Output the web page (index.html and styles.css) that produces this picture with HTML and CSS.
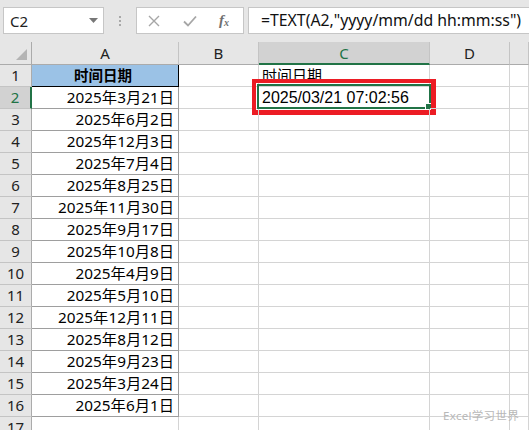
FILE: index.html
```html
<!DOCTYPE html>
<html>
<head>
<meta charset="utf-8">
<link rel="stylesheet" href="styles.css">
</head>
<body>
<div class="app">
  <div class="topbar">
    <div class="namebox"><span class="ref">C2</span><svg class="dd" width="9" height="5" viewBox="0 0 9 5"><path d="M0 0h9L4.5 5z" fill="#777"/></svg></div>
    <div class="grip"><i></i><i></i><i></i></div>
    <div class="btns">
      <svg class="ic" width="12" height="12" viewBox="0 0 12 12"><path d="M1 1L11 11M11 1L1 11" stroke="#a6a6a6" stroke-width="1.4" fill="none"/></svg>
      <svg class="ic" width="14" height="12" viewBox="0 0 14 12"><path d="M1 6.5L5 10.5L13 1.5" stroke="#a6a6a6" stroke-width="1.8" fill="none"/></svg>
      <span class="fx">f<sub>x</sub></span>
    </div>
    <div class="formula">=TEXT(A2,"yyyy/mm/dd hh:mm:ss")</div>
  </div>
  <div class="sheet">
    <div class="corner"><span class="tri"></span></div>
    <div class="ch">A</div><div class="ch">B</div><div class="ch sel">C</div><div class="ch">D</div><div class="ch last"></div>

    <div class="rh">1</div><div class="c a head">时间日期</div><div class="c"></div><div class="c txt">时间日期</div><div class="c"></div><div class="c"></div>
    <div class="rh sel">2</div><div class="c a">2025年3月21日</div><div class="c"></div><div class="c txt val">2025/03/21 07:02:56<span class="selbox"><span class="handle"></span></span><span class="redbox"></span></div><div class="c"></div><div class="c"></div>
    <div class="rh">3</div><div class="c a">2025年6月2日</div><div class="c"></div><div class="c"></div><div class="c"></div><div class="c"></div>
    <div class="rh">4</div><div class="c a">2025年12月3日</div><div class="c"></div><div class="c"></div><div class="c"></div><div class="c"></div>
    <div class="rh">5</div><div class="c a">2025年7月4日</div><div class="c"></div><div class="c"></div><div class="c"></div><div class="c"></div>
    <div class="rh">6</div><div class="c a">2025年8月25日</div><div class="c"></div><div class="c"></div><div class="c"></div><div class="c"></div>
    <div class="rh">7</div><div class="c a">2025年11月30日</div><div class="c"></div><div class="c"></div><div class="c"></div><div class="c"></div>
    <div class="rh">8</div><div class="c a">2025年9月17日</div><div class="c"></div><div class="c"></div><div class="c"></div><div class="c"></div>
    <div class="rh">9</div><div class="c a">2025年10月8日</div><div class="c"></div><div class="c"></div><div class="c"></div><div class="c"></div>
    <div class="rh">10</div><div class="c a">2025年4月9日</div><div class="c"></div><div class="c"></div><div class="c"></div><div class="c"></div>
    <div class="rh">11</div><div class="c a">2025年5月10日</div><div class="c"></div><div class="c"></div><div class="c"></div><div class="c"></div>
    <div class="rh">12</div><div class="c a">2025年12月11日</div><div class="c"></div><div class="c"></div><div class="c"></div><div class="c"></div>
    <div class="rh">13</div><div class="c a">2025年8月12日</div><div class="c"></div><div class="c"></div><div class="c"></div><div class="c"></div>
    <div class="rh">14</div><div class="c a">2025年9月23日</div><div class="c"></div><div class="c"></div><div class="c"></div><div class="c"></div>
    <div class="rh">15</div><div class="c a">2025年3月24日</div><div class="c"></div><div class="c"></div><div class="c"></div><div class="c"></div>
    <div class="rh">16</div><div class="c a">2025年6月1日</div><div class="c"></div><div class="c"></div><div class="c"></div><div class="c"></div>
    <div class="rh">17</div><div class="c"></div><div class="c"></div><div class="c"></div><div class="c"></div><div class="c"></div>
  </div>
  <div class="watermark">Excel学习世界</div>
</div>
</body>
</html>
```
FILE: styles.css
```css
* { box-sizing: border-box; }
body {
  margin: 0;
  width: 529px;
  height: 430px;
  overflow: hidden;
  background: #fff;
  font-family: "Noto Sans", "Noto Sans CJK SC", sans-serif;
  color: #000;
}
.app {
  position: relative;
  width: 529px;
  height: 430px;
  overflow: hidden;
}
.topbar {
  height: 42px;
  background: #e6e6e6;
  display: flex;
  align-items: flex-start;
  padding-top: 7px;
}
.namebox {
  margin-left: 3px;
  width: 101px;
  height: 27px;
  background: #fff;
  border: 1px solid #c6c6c6;
  display: flex;
  align-items: center;
  justify-content: space-between;
  padding: 0 5px 0 6px;
  font-size: 15px;
  color: #222;
}
.grip {
  width: 32px;
  height: 27px;
  display: flex;
  flex-direction: column;
  align-items: center;
  justify-content: center;
  gap: 2px;
}
.grip i {
  display: block;
  width: 2px;
  height: 2px;
  background: #a8a8a8;
}
.btns {
  width: 108px;
  height: 27px;
  background: #fff;
  border: 1px solid #c6c6c6;
  display: flex;
  align-items: center;
  gap: 23px;
  padding: 0 0 0 11px;
}
.fx {
  font-family: "Liberation Serif", serif;
  font-style: italic;
  font-weight: bold;
  font-size: 15px;
  color: #707070;
  line-height: 1;
  margin-left: -1px;
}
.fx sub {
  font-size: 10px;
  vertical-align: -1px;
}
.formula {
  margin-left: 4px;
  flex: 1;
  height: 27px;
  background: #fff;
  border: 1px solid #c6c6c6;
  border-right: none;
  padding-left: 12px;
  font-size: 15.8px;
  line-height: 25px;
  white-space: nowrap;
  color: #111;
}
.sheet {
  display: grid;
  grid-template-columns: 32px 147px 80px 171px 80px 1fr;
  grid-template-rows: 23px repeat(16, 22px) 22px;
}
.corner {
  background: #e6e6e6;
  border-right: 1px solid #ababab;
  border-bottom: 1px solid #ababab;
  position: relative;
}
.tri {
  position: absolute;
  right: 4px;
  bottom: 4px;
  width: 0;
  height: 0;
  border-left: 11px solid transparent;
  border-bottom: 11px solid #b4b4b4;
}
.ch {
  background: #e6e6e6;
  border-right: 1px solid #c4c4c4;
  border-bottom: 1px solid #ababab;
  font-size: 15px;
  text-align: center;
  line-height: 22px;
  color: #222;
}
.ch.sel {
  background: #d2d2d2;
  color: #217346;
  border-bottom: 2px solid #217346;
}
.rh {
  background: #e6e6e6;
  border-right: 1px solid #ababab;
  border-bottom: 1px solid #c4c4c4;
  font-size: 15px;
  text-align: center;
  line-height: 21px;
  color: #222;
}
.rh.sel {
  background: #d2d2d2;
  color: #217346;
  border-right: 2px solid #217346;
}
.c {
  border-right: 1px solid #d4d4d4;
  border-bottom: 1px solid #d4d4d4;
  font-size: 15px;
  line-height: 21px;
  white-space: nowrap;
  position: relative;
}
.c.a {
  font-size: 15.3px;
  text-align: right;
  padding-right: 4px;
  border-right-color: #9e9e9e;
  border-bottom-color: #9e9e9e;
}
.c.head {
  font-size: 14.5px;
  background: #9bc2e6;
  font-weight: bold;
  text-align: center;
  border-bottom-color: #000;
  border-right-color: #000;
}
.c.txt {
  padding-left: 3px;
}
.c.val {
  font-family: "Liberation Sans", "Noto Sans CJK SC", sans-serif;
  font-size: 16px;
}
.selbox {
  position: absolute;
  left: -2px;
  top: -3px;
  right: -2px;
  bottom: -1px;
  border: 2px solid #217346;
}
.handle {
  position: absolute;
  right: -3px;
  bottom: -3px;
  width: 7px;
  height: 7px;
  background: #217346;
  border: 1px solid #fff;
}
.redbox {
  position: absolute;
  left: -7px;
  top: -8px;
  right: -7px;
  bottom: -7px;
  border-style: solid;
  border-color: #ec1c24;
  border-width: 4px 5px 5px 4px;
}
.watermark {
  position: absolute;
  right: 10px;
  bottom: 7px;
  font-size: 11.5px;
  color: #b8b8b8;
  letter-spacing: 0.3px;
}
```
